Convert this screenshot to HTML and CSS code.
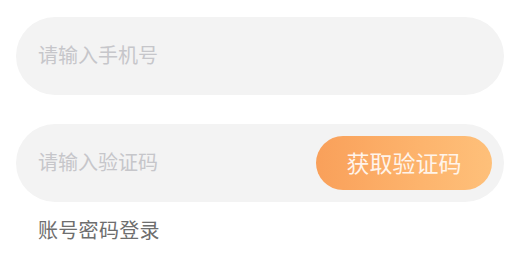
FILE: index.html
```html
<!DOCTYPE html>
<html lang="zh-CN">
<head>
<meta charset="utf-8">
<link rel="stylesheet" href="styles.css">
</head>
<body>
<div class="form">
  <div class="field">
    <span class="placeholder">请输入手机号</span>
  </div>
  <div class="field field-code">
    <span class="placeholder">请输入验证码</span>
    <button class="code-btn">获取验证码</button>
  </div>
  <div class="switch">账号密码登录</div>
</div>
</body>
</html>
```
FILE: styles.css
```css
html, body {
  margin: 0;
  padding: 0;
  background: #ffffff;
}
body {
  font-family: "Noto Sans CJK SC", "Noto Sans", sans-serif;
}
.form {
  display: flex;
  flex-direction: column;
  gap: 29px;
  padding: 17px 18px 0 16px;
}
.field {
  height: 78px;
  border-radius: 39px;
  background: #f3f3f3;
  display: flex;
  align-items: center;
  justify-content: space-between;
  padding: 0 12px 0 22px;
  box-sizing: border-box;
}
.placeholder {
  font-size: 20px;
  color: #c6c6ca;
  letter-spacing: 0;
  margin-bottom: 4px;
}
.code-btn {
  width: 176px;
  height: 54px;
  border: none;
  border-radius: 27px;
  background: linear-gradient(90deg, #f9a05a 0%, #fdb46d 60%, #fec07a 100%);
  color: #fff4ea;
  font-family: "Noto Sans CJK SC", "Noto Sans", sans-serif;
  font-size: 23px;
  padding: 0 0 2px;
}
.switch {
  margin-top: -16px;
  padding-left: 22px;
  font-size: 20px;
  color: #6e6e6e;
  letter-spacing: 0.3px;
}
```
